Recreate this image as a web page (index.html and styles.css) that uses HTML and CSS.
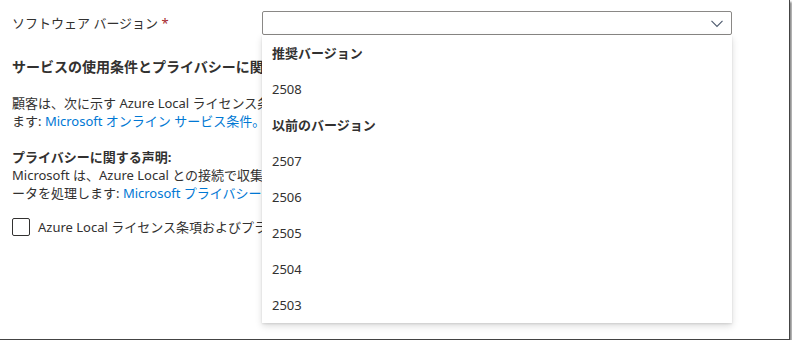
FILE: index.html
```html
<!DOCTYPE html>
<html lang="ja">
<head>
<meta charset="utf-8">
<link rel="stylesheet" href="styles.css">
</head>
<body>
<div class="frame">
  <div class="content">
    <div class="field-row">
      <label class="field-label">ソフトウェア バージョン <span class="req">*</span></label>
      <div class="select-wrap">
        <div class="select-box">
          <svg class="chevron" width="12" height="8" viewBox="0 0 12 8"><polyline points="0.5,0.8 6,6.5 11.5,0.8" fill="none" stroke="#4d5a6e" stroke-width="1.1"/></svg>
        </div>
        <div class="dropdown">
          <div class="opt header">推奨バージョン</div>
          <div class="opt">2508</div>
          <div class="opt header">以前のバージョン</div>
          <div class="opt">2507</div>
          <div class="opt">2506</div>
          <div class="opt">2505</div>
          <div class="opt">2504</div>
          <div class="opt">2503</div>
        </div>
      </div>
    </div>

    <div class="terms">
      <h3 class="section-title">サービスの使用条件とプライバシーに関する声明</h3>

      <p class="para">顧客は、次に示す Azure Local ライセンス条項に同意し、その使用には次の条件が適用され<br>ます: <a class="link" href="#">Microsoft オンライン サービス条件。</a></p>

      <p class="para privacy"><strong>プライバシーに関する声明:</strong><br>Microsoft は、Azure Local との接続で収集されたデータを使用し、次に従ってデ<br>ータを処理します: <a class="link" href="#">Microsoft プライバシー ステートメント。</a></p>

      <div class="check-row">
        <span class="checkbox"></span>
        <span class="check-label">Azure Local ライセンス条項およびプライバシーに関する声明に同意します</span>
      </div>
    </div>
  </div>
</div>
</body>
</html>
```

FILE: styles.css
```css
html, body {
  margin: 0;
  padding: 0;
  background: #ffffff;
}

body {
  font-family: "Noto Sans", "Noto Sans CJK JP", sans-serif;
  font-size: 13px;
  color: #323130;
}

.frame {
  width: 789px;
  height: 339px;
  border-right: 1px solid #444;
  border-bottom: 1px solid #444;
  box-shadow: 2px 2px 2px rgba(0, 0, 0, 0.45);
  overflow: hidden;
  position: relative;
}

.content {
  padding: 11px 0 0 12px;
}

.field-row {
  display: flex;
  align-items: center;
  height: 24px;
}

.field-label {
  width: 250px;
  line-height: 18px;
  flex: none;
}

.req {
  color: #a4262c;
}

.select-wrap {
  position: relative;
  width: 470px;
}

.select-box {
  box-sizing: border-box;
  height: 24px;
  border: 1px solid #8a8886;
  border-radius: 2px;
  display: flex;
  align-items: center;
  justify-content: flex-end;
  padding-right: 8px;
}

.chevron {
  display: block;
  margin-top: 1px;
}

.dropdown {
  position: absolute;
  top: 24px;
  left: 0;
  width: 470px;
  background: #ffffff;
  box-shadow: 0 3px 7px rgba(0, 0, 0, 0.14), 0 1px 2px rgba(0, 0, 0, 0.10);
  z-index: 5;
}

.opt {
  height: 36px;
  line-height: 36px;
  padding-left: 10px;
  font-size: 13px;
}

.opt.header {
  font-weight: 700;
}

.terms {
  width: 250px;
  overflow: hidden;
}

.section-title {
  margin: 22px 0 0 0;
  font-size: 14px;
  line-height: 20px;
  font-weight: 700;
  white-space: nowrap;
}

.para {
  margin: 17px 0 0 0;
  line-height: 18px;
  white-space: nowrap;
}

.para.privacy {
  margin-top: 18px;
}

.para strong {
  font-weight: 700;
}

.link {
  color: #0078d4;
  text-decoration: none;
}

.check-row {
  display: flex;
  align-items: center;
  gap: 8px;
  margin-top: 16px;
  padding-bottom: 4px;
  white-space: nowrap;
}

.checkbox {
  box-sizing: border-box;
  width: 18px;
  height: 18px;
  border: 1px solid #323130;
  border-radius: 2px;
  flex: none;
}

.check-label {
  line-height: 18px;
}
```
